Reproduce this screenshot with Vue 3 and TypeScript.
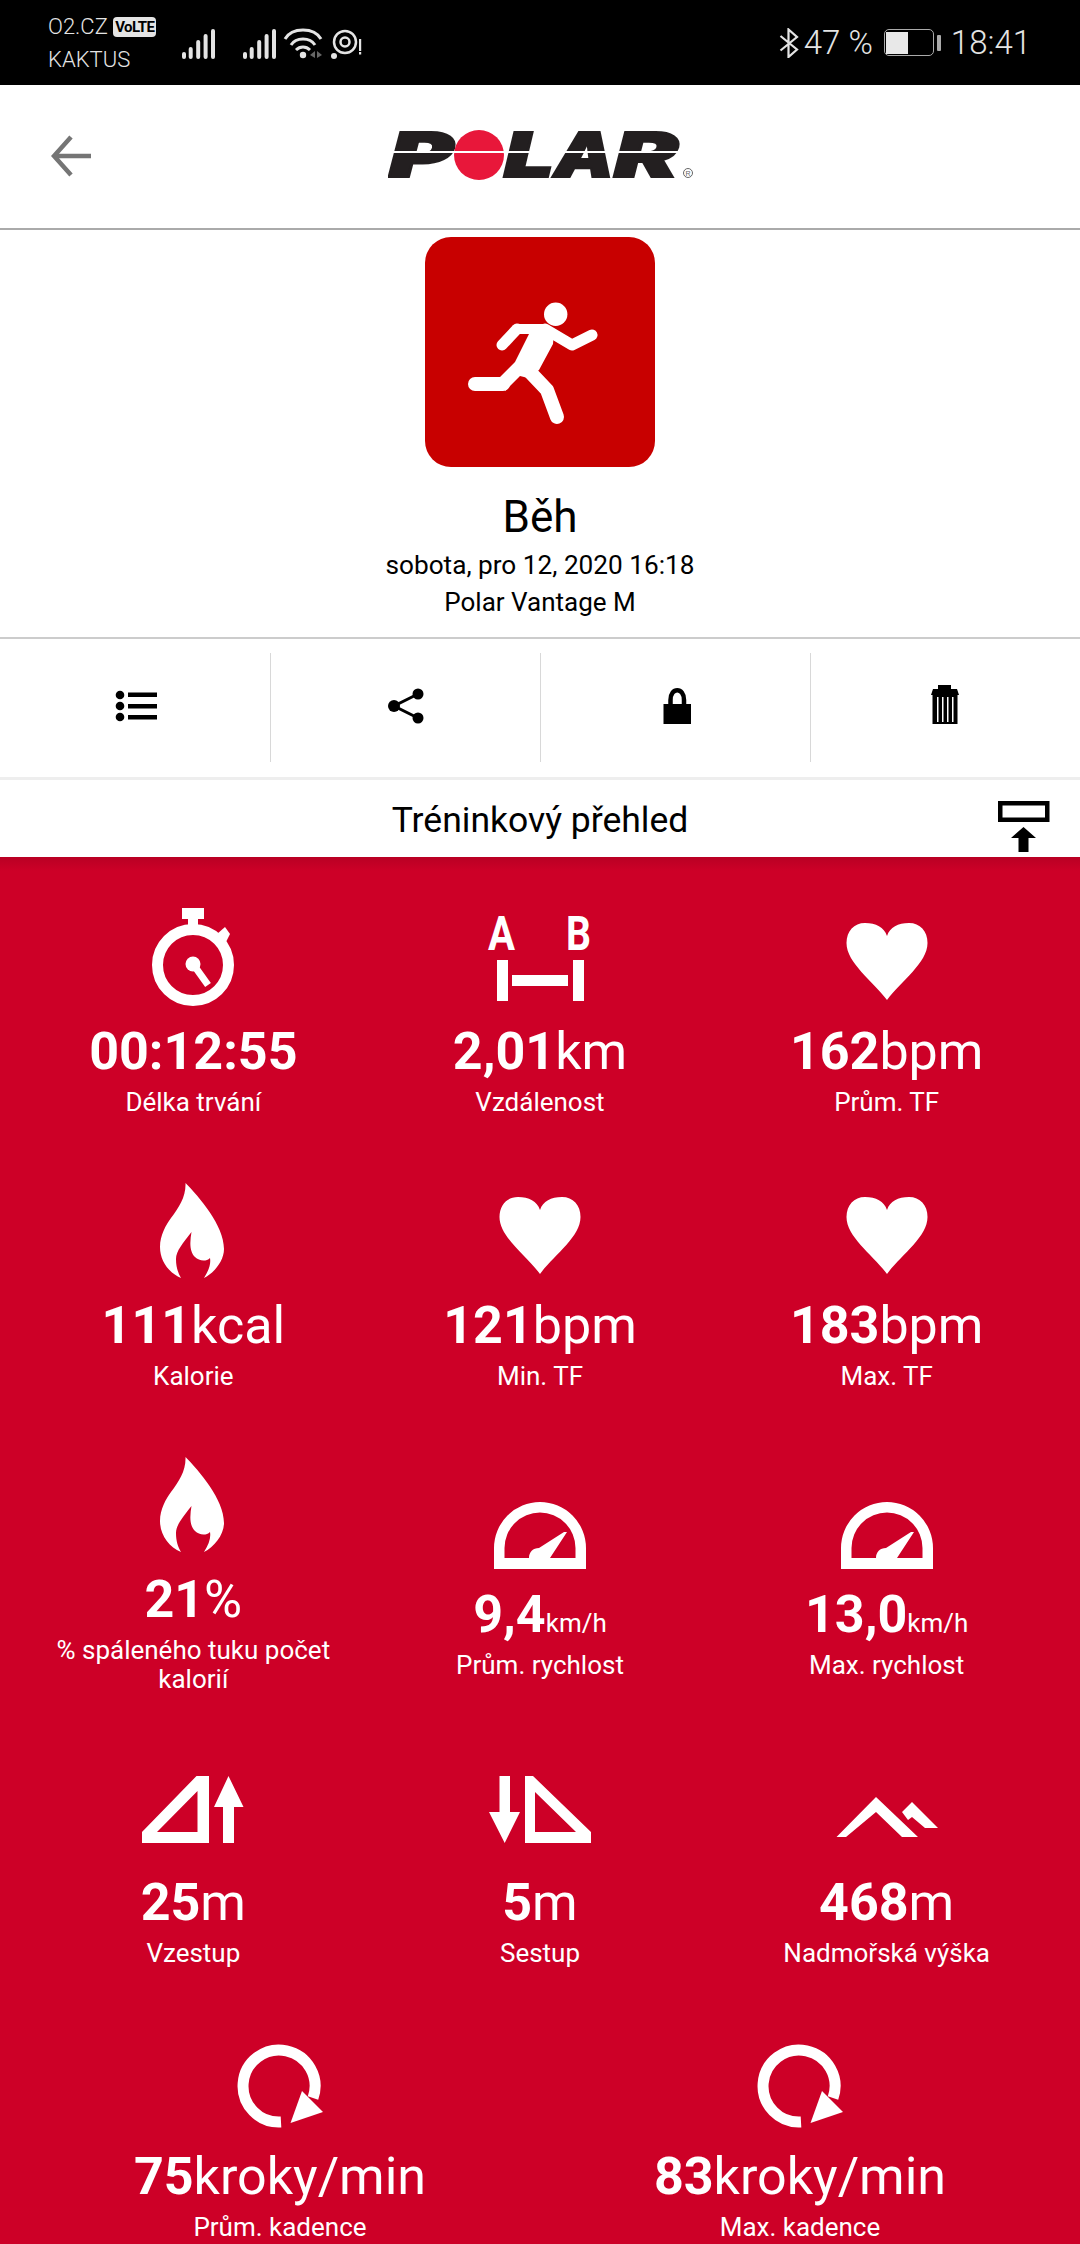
<script setup lang="ts">
interface Stat {
  icon: string
  value: string
  unit: string
  label: string
  small?: boolean
  wide?: boolean
}

const actions = ['list', 'share', 'lock', 'trash']

const stats: Stat[] = [
  { icon: 'watch', value: '00:12:55', unit: '', label: 'Délka trvání' },
  { icon: 'ab', value: '2,01', unit: 'km', label: 'Vzdálenost' },
  { icon: 'heart', value: '162', unit: 'bpm', label: 'Prům. TF' },
  { icon: 'flame', value: '111', unit: 'kcal', label: 'Kalorie' },
  { icon: 'heart', value: '121', unit: 'bpm', label: 'Min. TF' },
  { icon: 'heart', value: '183', unit: 'bpm', label: 'Max. TF' },
  { icon: 'flame', value: '21', unit: '%', label: '% spáleného tuku počet kalorií' },
  { icon: 'gauge', value: '9,4', unit: 'km/h', label: 'Prům. rychlost', small: true },
  { icon: 'gauge', value: '13,0', unit: 'km/h', label: 'Max. rychlost', small: true },
  { icon: 'up', value: '25', unit: 'm', label: 'Vzestup' },
  { icon: 'down', value: '5', unit: 'm', label: 'Sestup' },
  { icon: 'peak', value: '468', unit: 'm', label: 'Nadmořská výška' },
  { icon: 'cadence', value: '75', unit: 'kroky/min', label: 'Prům. kadence', wide: true },
  { icon: 'cadence', value: '83', unit: 'kroky/min', label: 'Max. kadence', wide: true },
]

const bars = [
  { x: 0, y: 30, h: 7 },
  { x: 6.7, y: 25, h: 12 },
  { x: 14.2, y: 18, h: 19 },
  { x: 21.6, y: 12, h: 25 },
  { x: 29, y: 7, h: 30 },
  { x: 61, y: 30, h: 7 },
  { x: 67.7, y: 25, h: 12 },
  { x: 75.2, y: 18, h: 19 },
  { x: 82.6, y: 12, h: 25 },
  { x: 90, y: 7, h: 30 },
]
</script>

<template>
  <div class="phone">
    <header class="status">
      <div class="carrier">
        <div class="carrier-line">O2.CZ <span class="volte">VoLTE</span></div>
        <div class="carrier-line">KAKTUS</div>
      </div>
      <svg class="status-icons" width="182" height="42" viewBox="0 0 182 42">
        <rect v-for="(b, i) in bars" :key="i" :x="b.x" :y="b.y" width="4" :height="b.h" rx="2" fill="#e4e4e4" />
        <g fill="none" stroke="#e4e4e4" stroke-width="3">
          <path d="M103 17 C110 5 132 5 139 17" />
          <path d="M109 23 C114 15 128 15 133 23" />
          <path d="M114 28 C118 24 124 24 128 28" />
        </g>
        <circle cx="121" cy="33" r="3.200" fill="#e4e4e4" />
        <path d="M128 33 L133 29 V36 Z M135 29 L140 33 L135 36 Z" fill="#666" />
        <circle cx="163" cy="20" r="11" fill="none" stroke="#e4e4e4" stroke-width="2.500" />
        <circle cx="163" cy="20" r="4.500" fill="none" stroke="#e4e4e4" stroke-width="2.500" />
        <circle cx="152" cy="34" r="3" fill="#e4e4e4" />
        <rect x="177" y="17" width="2.200" height="12" fill="#e4e4e4" />
        <rect x="177" y="30" width="2.200" height="2.500" fill="#e4e4e4" />
      </svg>
      <div class="status-right">
        <svg width="20" height="30" viewBox="0 0 20 30"><path d="M1.500 8 L18 21.500 L9.500 29 V1.500 L18 9 L1.500 22.500" fill="none" stroke="#e4e4e4" stroke-width="2.200" /></svg>
        <span class="pct">47 %</span>
        <span class="battery"><span class="battery-fill"></span></span>
        <span class="nub"></span>
        <span class="clock">18:41</span>
      </div>
    </header>

    <div class="topbar">
      <svg class="back" width="42" height="42" viewBox="0 0 42 42"><path d="M40 21 H4 M20 2 L3 21 L20 40" fill="none" stroke="#757575" stroke-width="4.500" /></svg>
      <svg class="logo" width="310" height="100" viewBox="0 -24 310 100">
        <g class="logo-text" fill="#231f20" stroke="#231f20" stroke-width="2">
          <text x="1" y="46.500" textLength="64" lengthAdjust="spacingAndGlyphs">P</text>
          <text x="116" y="46.500" textLength="50" lengthAdjust="spacingAndGlyphs">L</text>
          <text x="166" y="46.500" textLength="60" lengthAdjust="spacingAndGlyphs">A</text>
          <text x="226" y="46.500" textLength="64" lengthAdjust="spacingAndGlyphs">R</text>
        </g>
        <rect x="0" y="21" width="292" height="2" fill="#fff" />
        <circle cx="91" cy="25" r="25" fill="#e8173a" />
        <rect x="64" y="21" width="54" height="2" fill="#fff" />
        <circle cx="300" cy="43" r="4.500" fill="none" stroke="#666" stroke-width="1" />
        <text x="300" y="46" text-anchor="middle" class="reg">R</text>
      </svg>
    </div>

    <section class="summary">
      <div class="sport-tile">
        <svg width="230" height="230" viewBox="0 0 230 230">
          <circle cx="130.700" cy="77.300" r="11.700" fill="#fff" />
          <path d="M90 87 H118 L129 94 L128 107 L114 133 L103 141 L95 139 L80 154 L75 140 L90 125 L104 97 H88 Z" fill="#fff" />
          <path d="M92 92 L77 108" fill="none" stroke="#fff" stroke-width="11" stroke-linecap="round" />
          <path d="M120 92 L147 108 L167 98" fill="none" stroke="#fff" stroke-width="11" stroke-linecap="round" stroke-linejoin="round" />
          <path d="M50 147 H78" fill="none" stroke="#fff" stroke-width="14" stroke-linecap="round" />
          <path d="M104 134 L122 153 L132 180" fill="none" stroke="#fff" stroke-width="14" stroke-linecap="round" stroke-linejoin="round" />
        </svg>
      </div>
      <div class="sport-name">Běh</div>
      <div class="sport-meta">sobota, pro 12, 2020 16:18</div>
      <div class="sport-meta device">Polar Vantage M</div>
    </section>

    <nav class="actions">
      <div v-for="a in actions" :key="a" class="action">
        <svg width="60" height="60" viewBox="0 0 60 60">
          <g v-if="a === 'list'">
            <circle cx="15" cy="19" r="4.300" /><circle cx="15" cy="30" r="4.300" /><circle cx="15" cy="41" r="4.300" />
            <rect x="23" y="16.500" width="29" height="4.500" /><rect x="23" y="28" width="29" height="4.500" /><rect x="23" y="39" width="29" height="4.500" />
          </g>
          <g v-else-if="a === 'share'">
            <path d="M42 18 L18 30 L42 42" fill="none" stroke="#000" stroke-width="3" />
            <circle cx="42" cy="18" r="5.500" /><circle cx="18" cy="30" r="6" /><circle cx="42" cy="42" r="5.500" />
          </g>
          <g v-else-if="a === 'lock'">
            <path d="M24.500 28 V24 C24.500 11 38 11 38 24 V28" fill="none" stroke="#000" stroke-width="4.500" />
            <rect x="17.500" y="28" width="27.500" height="20" />
          </g>
          <g v-else>
            <rect x="22" y="9" width="13" height="5" />
            <path d="M15 19 L17 13 H41 L43 19 Z" />
            <rect x="16.500" y="19" width="25" height="29" />
            <rect x="21" y="21" width="1.500" height="25" fill="#fff" />
            <rect x="26" y="21" width="1.500" height="25" fill="#fff" />
            <rect x="31" y="21" width="1.500" height="25" fill="#fff" />
            <rect x="36" y="21" width="1.500" height="25" fill="#fff" />
          </g>
        </svg>
      </div>
    </nav>

    <div class="section-title">
      <span>Tréninkový přehled</span>
      <svg class="collapse" width="52" height="54" viewBox="0 0 52 54">
        <rect x="2.250" y="2.250" width="47" height="16.500" fill="none" stroke="#000" stroke-width="4.500" />
        <path d="M25.500 26 L38 37 H30.500 V51 H20.500 V37 H13 Z" />
      </svg>
    </div>

    <main class="stats">
      <div v-for="s in stats" :key="s.label" class="stat" :class="{ wide: s.wide }">
        <svg class="stat-icon" width="120" height="120" viewBox="0 0 120 120">
          <g v-if="s.icon === 'watch'" fill="#fff">
            <rect x="49" y="7" width="22" height="11" />
            <rect x="55" y="17" width="10" height="9" />
            <path d="M88 38 L84 33 L92 26 L97 33 L93 41 Z" />
            <circle cx="60" cy="64" r="35.500" fill="none" stroke="#fff" stroke-width="11" />
            <circle cx="60" cy="63" r="7.500" />
            <path d="M60 63 L75 84" stroke="#fff" stroke-width="7" />
          </g>
          <g v-else-if="s.icon === 'ab'" fill="#fff">
            <text x="8" y="49" class="ab" textLength="27" lengthAdjust="spacingAndGlyphs">A</text>
            <text x="86" y="49" class="ab" textLength="25" lengthAdjust="spacingAndGlyphs">B</text>
            <rect x="17" y="59" width="11" height="41" />
            <rect x="93" y="59" width="11" height="41" />
            <rect x="32" y="74" width="56" height="11" />
          </g>
          <path v-else-if="s.icon === 'heart'" fill="#fff" d="M60 99 C46 80 19.500 62 19.500 42 C19.500 30 27 22 38 22 C49 22 57 26 60 35 C63 26 71 22 82 22 C93 22 100.500 30 100.500 42 C100.500 62 74 80 60 99 Z" />
          <path v-else-if="s.icon === 'flame'" fill="#fff" d="M52.500 8 C66 22 91 50 91 74 C91 86 81 98 71 103 C76 95 78 89 77 83 C73 87 66 86 62 82 C56 76 57 66 58.500 57 C50 68 43 76 43 84 C43 92 45 98 48 103 C36 98 27 86 27 72 C27 60 33 50 38 43 C46 32 53 22 52.500 8 Z" />
          <g v-else-if="s.icon === 'gauge'" fill="#fff">
            <path fill-rule="evenodd" d="M14 105 V84 A46 46 0 0 1 106 84 V105 Z M24.500 94 H95.500 V84 A35.500 35.500 0 0 0 24.500 84 Z" />
            <path d="M49 94 C49 88 53 84 59 84 L84 68 L87 68 L70 94 Z" />
          </g>
          <g v-else-if="s.icon === 'up'" fill="#fff">
            <path fill-rule="evenodd" d="M9 91 V80 L63.500 24 H76 V91 Z M24 80 H64.500 V39 Z" />
            <path d="M95.500 24 L110.500 55 H101 V91 H90 V55 H81 Z" />
          </g>
          <g v-else-if="s.icon === 'down'" fill="#fff">
            <path fill-rule="evenodd" d="M45 24 H53 L111 80 V91 H45 Z M55 40 V80 H96 Z" />
            <path d="M24.700 91 L9 60 H19.500 V24 H30 V60 H40 Z" />
          </g>
          <g v-else-if="s.icon === 'peak'" fill="#fff">
            <path d="M49 45 L91 85 H75 L49 60 L19 85 H9.500 Z" />
            <path d="M85 50 L111 76 H98 L85 65 L81 68 L75 60 Z" />
          </g>
          <g v-else>
            <path d="M61 96 A36 36 0 1 1 93 72" fill="none" stroke="#fff" stroke-width="11" />
            <path d="M70.500 97 L82 65 L103 86 Z" fill="#fff" />
          </g>
        </svg>
        <div class="value" :class="{ small: s.small }">
          <strong>{{ s.value }}</strong><span class="unit">{{ s.unit }}</span>
        </div>
        <div class="label">{{ s.label }}</div>
      </div>
    </main>
  </div>
</template>

<style>
html, body { margin: 0; padding: 0; background: #fff; }
</style>

<style scoped>
.phone {
  width: 1080px;
  height: 2244px;
  overflow: hidden;
  display: flex;
  flex-direction: column;
  font-family: Roboto, "Liberation Sans", sans-serif;
  background: #fff;
  color: #000;
}
.status {
  height: 85px;
  flex: none;
  background: #000;
  color: #e4e4e4;
  display: flex;
  align-items: center;
  padding: 0 49px 0 48px;
  box-sizing: border-box;
}
.carrier { width: 134px; font-size: 22px; font-weight: 300; line-height: 33px; }
.carrier-line { white-space: nowrap; }
.volte {
  display: inline-block;
  background: #e4e4e4;
  color: #000;
  font-size: 15px;
  font-weight: 700;
  border-radius: 4px;
  padding: 0 2px;
  line-height: 20px;
  letter-spacing: -0.6px;
  vertical-align: 2px;
}
.status-icons { display: block; flex: none; }
.status-right { margin-left: auto; display: flex; align-items: center; font-size: 33px; font-weight: 300; }
.pct { margin-left: 5px; }
.battery {
  margin-left: 11px;
  width: 50px;
  height: 27px;
  border: 1.5px solid #aaa;
  border-radius: 5px;
  display: block;
  box-sizing: border-box;
  padding: 1.5px;
}
.battery-fill { display: block; width: 22px; height: 100%; background: #e8e8e8; }
.nub { width: 4px; height: 16px; background: #aaa; margin-left: 3px; border-radius: 1px; }
.clock { margin-left: 10px; }

.topbar {
  height: 145px;
  flex: none;
  box-sizing: border-box;
  border-bottom: 2px solid #aaa;
  position: relative;
  display: flex;
  align-items: center;
  justify-content: center;
}
.back { position: absolute; left: 51px; top: 50px; }
.logo { margin-left: 6px; margin-bottom: 2px; display: block; }
.logo-text text { font-family: Inter, "Liberation Sans", sans-serif; font-weight: 900; font-style: italic; font-size: 62px; }
.reg { font-family: "Liberation Sans", sans-serif; font-size: 7px; fill: #666; }

.summary {
  height: 409px;
  flex: none;
  box-sizing: border-box;
  padding-top: 7px;
  border-bottom: 2px solid #ccc;
  display: flex;
  flex-direction: column;
  align-items: center;
}
.sport-tile { width: 230px; height: 230px; background: #c80000; border-radius: 26px; }
.sport-tile svg { display: block; }
.sport-name { margin-top: 26px; font-size: 44px; line-height: 48px; }
.sport-meta { margin-top: 9px; font-size: 26.200px; line-height: 30px; }
.device { margin-top: 7px; font-size: 26px; }

.actions {
  height: 141px;
  flex: none;
  display: grid;
  grid-template-columns: repeat(4, 1fr);
  padding: 14px 0 15px;
  box-sizing: border-box;
  border-bottom: 3px solid #eee;
}
.action { display: flex; align-items: center; justify-content: center; border-left: 1px solid #d8d8d8; }
.action:first-child { border-left: none; }
.action svg { margin-bottom: 3px; }

.section-title {
  height: 77px;
  flex: none;
  box-sizing: border-box;
  padding-top: 2px;
  position: relative;
  display: flex;
  align-items: center;
  justify-content: center;
  font-size: 35.500px;
}
.collapse { position: absolute; left: 998px; top: 21px; }

.stats {
  flex: 1;
  background: linear-gradient(#b90024 0, #cd0027 14px);
  color: #fff;
  display: grid;
  grid-template-columns: repeat(6, 1fr);
  align-items: center;
  align-content: start;
  row-gap: 58px;
  padding: 44px 20px 0;
}
.stat {
  grid-column: span 2;
  display: flex;
  flex-direction: column;
  align-items: center;
  text-align: center;
}
.stat.wide { grid-column: span 3; }
.stat-icon { display: block; }
.ab { font-family: Roboto, "Liberation Sans", sans-serif; font-size: 49px; font-weight: 700; }
.value { font-size: 52px; line-height: 61px; white-space: nowrap; }
.value strong { font-weight: 700; }
.value .unit { font-weight: 400; }
.value.small .unit { font-size: 26px; line-height: 1; }
.label { margin-top: 6px; font-size: 26px; line-height: 29px; padding: 0 20px; }
</style>
